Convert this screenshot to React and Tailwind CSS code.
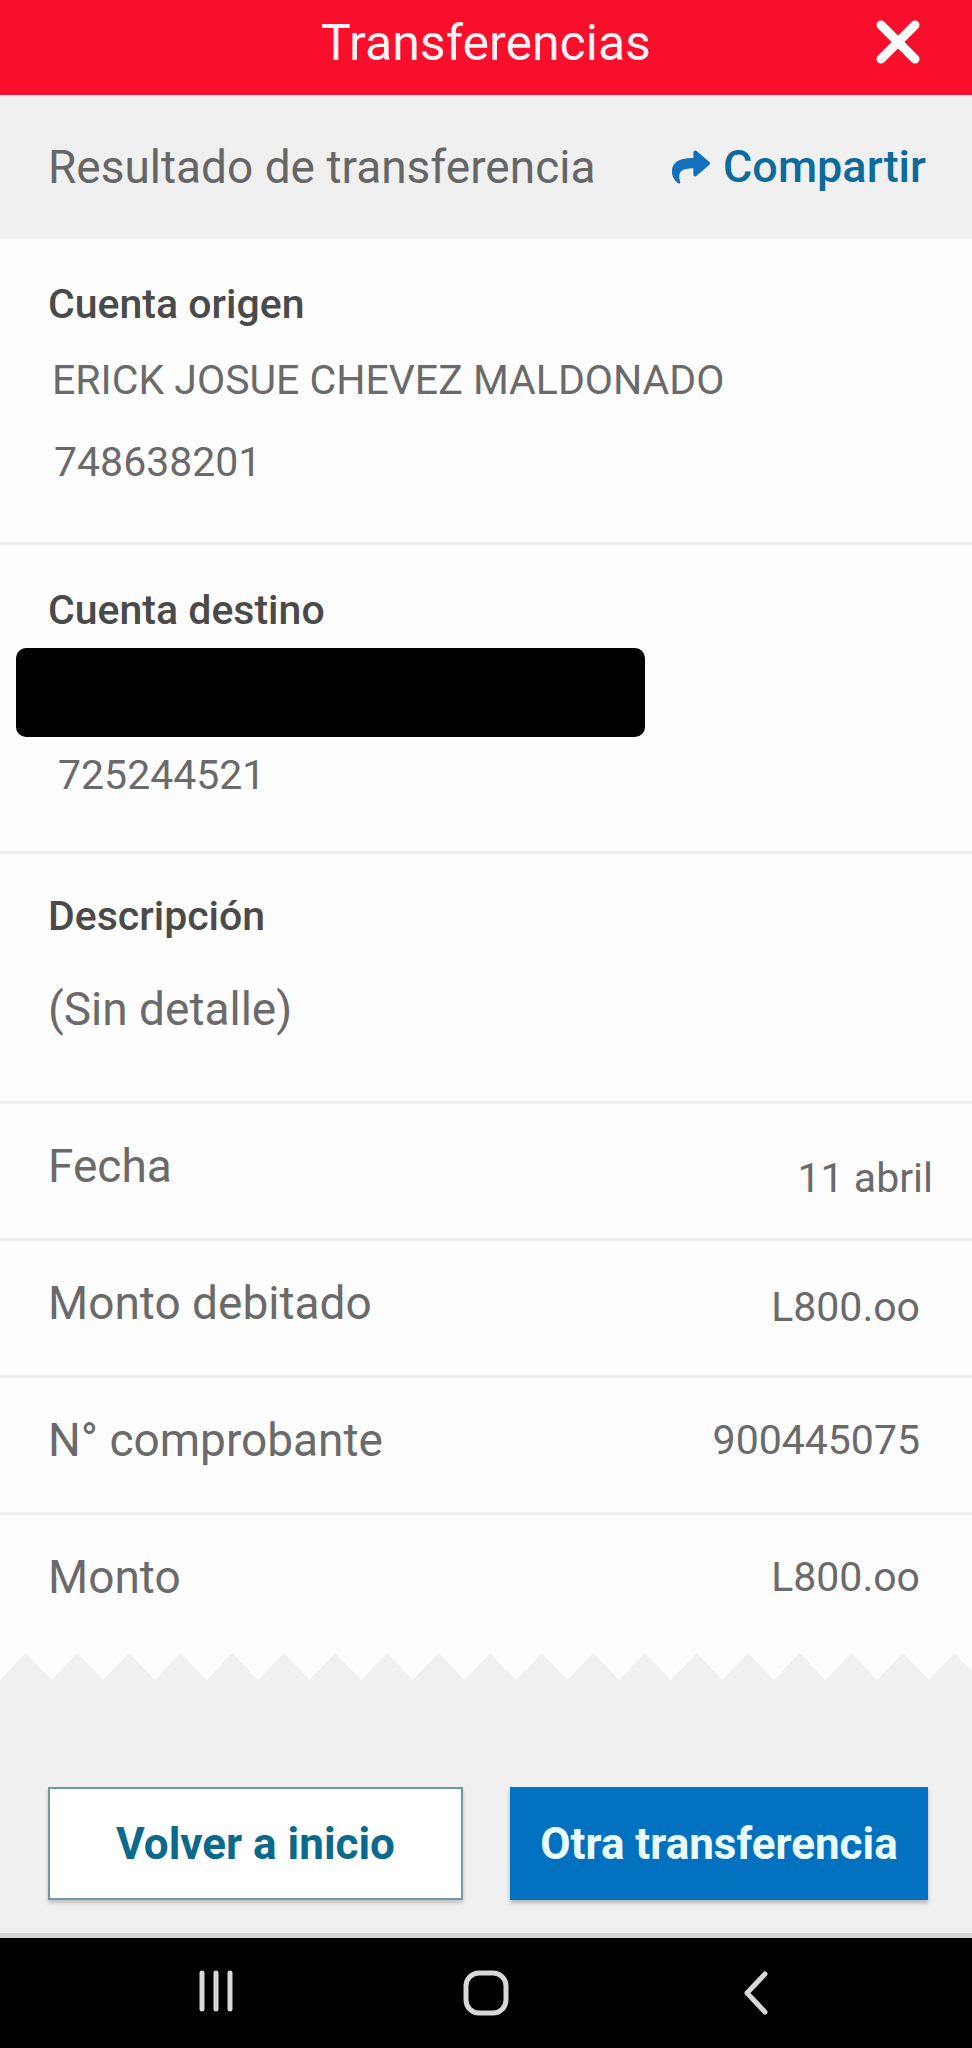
import React from 'react';
import { FaShare } from 'react-icons/fa';

// rows of the detail table
const rows = [
  { label: 'Fecha', value: '11 abril', shift: 'mt-[12px] -mr-[13px]' },
  { label: 'Monto debitado', value: 'L800.oo', shift: 'mt-[4px]' },
  { label: 'N° comprobante', value: '900445075', shift: '' },
  { label: 'Monto', value: 'L800.oo', shift: '' },
];

// zigzag points for the torn paper edge
const zigzag = (() => {
  const pts = ['0,0'];
  for (let k = 0; k < 20; k++) {
    pts.push(`${k * 51.6},27`);
    pts.push(`${k * 51.6 + 25.8},0`);
  }
  pts.push('972,0');
  return pts.join(' ');
})();

const App = () => {
  return (
    <div className="w-[972px] h-[2048px] flex flex-col bg-[#fdfdfd] font-['Roboto',_'Liberation_Sans',_sans-serif] overflow-hidden">
      {/* top bar */}
      <div className="h-[95px] bg-[#f90f2b] flex items-center justify-center relative shrink-0">
        <span className="text-[50px] leading-none text-[#fff2f4] -mt-[10px]">Transferencias</span>
        <button className="absolute right-[50px] top-[18px] w-[48px] h-[48px]">
          <svg viewBox="0 0 48 48" className="w-[48px] h-[48px]">
            <path d="M7 7L41 41M41 7L7 41" stroke="#fff" strokeWidth="9" strokeLinecap="round" />
          </svg>
        </button>
      </div>

      {/* result bar */}
      <div className="h-[144px] bg-[#f0f0f0] flex items-center justify-between pl-[48px] pr-[46px] shrink-0">
        <span className="text-[46px] text-[#666666]">Resultado de transferencia</span>
        <div className="flex items-center gap-[10px] text-[#0d6b9c]">
          <FaShare className="w-[44px] h-[38px] text-[#1271bd]" />
          <span className="text-[45px] font-medium">Compartir</span>
        </div>
      </div>

      {/* cuenta origen */}
      <div className="pt-[41px] pb-[56px] pl-[48px] border-b-[3px] border-[#efefef] shrink-0">
        <div className="text-[41px] leading-[48px] font-medium text-[#4a4a4a]">Cuenta origen</div>
        <div className="mt-[28px] pl-[4px] text-[41px] leading-[48px] text-[#6a6a6a]">ERICK JOSUE CHEVEZ MALDONADO</div>
        <div className="mt-[34px] pl-[6px] text-[41px] leading-[48px] text-[#6a6a6a]">748638201</div>
      </div>

      {/* cuenta destino */}
      <div className="pt-[41px] pb-[52px] border-b-[3px] border-[#efefef] shrink-0">
        <div className="pl-[48px] text-[41px] leading-[48px] font-medium text-[#4a4a4a]">Cuenta destino</div>
        <div className="mt-[14px] ml-[16px] w-[629px] h-[89px] bg-black rounded-[10px]"></div>
        <div className="mt-[14px] pl-[58px] text-[41px] leading-[48px] text-[#6a6a6a]">725244521</div>
      </div>

      {/* descripcion */}
      <div className="pt-[38px] pb-[68px] pl-[48px] border-b-[3px] border-[#efefef] shrink-0">
        <div className="text-[41px] leading-[48px] font-medium text-[#4a4a4a]">Descripción</div>
        <div className="mt-[45px] text-[46px] leading-[48px] text-[#6a6a6a]">(Sin detalle)</div>
      </div>

      {/* detail rows */}
      {rows.map((row, i) => (
        <div
          key={row.label}
          className={
            i < rows.length - 1
              ? 'h-[137px] pt-[38px] pl-[48px] pr-[52px] flex justify-between items-start border-b-[3px] border-[#efefef] shrink-0'
              : 'h-[138px] pt-[38px] pl-[48px] pr-[52px] flex justify-between items-start shrink-0'
          }
        >
          <span className="text-[46px] leading-[48px] text-[#6a6a6a]">{row.label}</span>
          <span className={`text-[41px] leading-[48px] text-[#6a6a6a] ${row.shift}`}>{row.value}</span>
        </div>
      ))}

      {/* torn edge + buttons */}
      <div className="flex-1 bg-[#f0f0f0] flex flex-col">
        <svg viewBox="0 0 972 27" preserveAspectRatio="none" className="w-full h-[27px] block">
          <polygon points={zigzag} fill="#fdfdfd" />
        </svg>
        <div className="flex-1 flex items-start pt-[107px] pl-[48px] pr-[44px] gap-[47px] border-b-[5px] border-[#d6d6d6]">
          <button className="w-[415px] h-[113px] bg-white border-[2px] border-[#6f98a8] shadow-[0_3px_4px_rgba(0,0,0,0.2)] text-[44px] font-bold text-[#0b6a8b]">
            Volver a inicio
          </button>
          <button className="flex-1 h-[113px] bg-[#0271c0] shadow-[0_3px_4px_rgba(0,0,0,0.25)] text-[44px] font-bold text-[#eafcff]">
            Otra transferencia
          </button>
        </div>
      </div>

      {/* android nav bar */}
      <div className="h-[110px] bg-black flex justify-center items-center shrink-0">
        <div className="grid grid-cols-3 w-[810px]">
          <div className="flex justify-center">
            <svg width="40" height="42" viewBox="0 0 40 42">
              <path d="M6 3V39M20 3V39M34 3V39" stroke="#d8d8d8" strokeWidth="5" strokeLinecap="round" />
            </svg>
          </div>
          <div className="flex justify-center">
            <svg width="46" height="46" viewBox="0 0 46 46">
              <rect x="3" y="3" width="40" height="40" rx="13" fill="none" stroke="#d8d8d8" strokeWidth="5" />
            </svg>
          </div>
          <div className="flex justify-center">
            <svg width="28" height="46" viewBox="0 0 28 46">
              <path d="M23 4L5 23L23 42" fill="none" stroke="#d8d8d8" strokeWidth="5" strokeLinecap="round" strokeLinejoin="round" />
            </svg>
          </div>
        </div>
      </div>
    </div>
  );
};

export default App;
